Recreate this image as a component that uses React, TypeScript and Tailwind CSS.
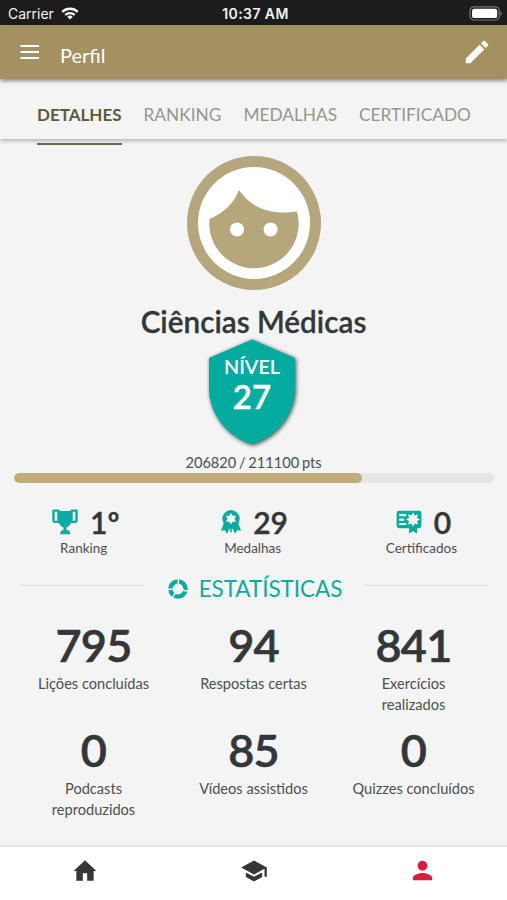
import type { ReactNode } from "react";
import { MdEdit, MdPerson, MdSchool } from "react-icons/md";

const tabs = ["RANKING", "MEDALHAS", "CERTIFICADO"];

const stats = [
  { value: "795", label: "Lições concluídas" },
  { value: "94", label: "Respostas certas" },
  { value: "841", label: "Exercícios realizados" },
  { value: "0", label: "Podcasts reproduzidos" },
  { value: "85", label: "Vídeos assistidos" },
  { value: "0", label: "Quizzes concluídos" },
];

const points = { current: 206820, next: 211100, percent: 72.5 };

function WifiIcon() {
  return (
    <svg viewBox="0 0 18 13" className="w-[18px] h-[13px]" fill="none" stroke="#f4f4f4" strokeWidth="2.3">
      <path d="M1.2 4.9a11.2 11.2 0 0 1 15.6 0" />
      <path d="M4.2 8a7 7 0 0 1 9.6 0" />
      <path d="M9 12.6 6.3 9.8a4 4 0 0 1 5.4 0z" fill="#f4f4f4" stroke="none" />
    </svg>
  );
}

function BatteryIcon() {
  return (
    <svg viewBox="0 0 34 15" className="w-[34px] h-[15px]">
      <rect x="1" y="0.8" width="29.2" height="13.2" rx="4" fill="none" stroke="#77777a" strokeWidth="1.2" />
      <rect x="3" y="2.7" width="25.2" height="9.4" rx="2.2" fill="#fff" />
      <path d="M31.5 5.2c1.8.5 1.8 4 0 4.5z" fill="#77777a" />
    </svg>
  );
}

function Avatar() {
  return (
    <svg viewBox="0 0 134 134" className="w-[134px] h-[134px]">
      <circle cx="67" cy="67" r="67" fill="#b5a67c" />
      <circle cx="67" cy="67" r="56" fill="#fff" />
      <path
        d="M52 34C64 52 84 59.500 110 55.500A44.700 44.700 0 1 1 22.500 63C37 57 47 47 52 34z"
        fill="#b5a67c"
      />
      <circle cx="50" cy="73.500" r="7" fill="#fff" />
      <circle cx="83.600" cy="73.500" r="7" fill="#fff" />
    </svg>
  );
}

function TrophyIcon() {
  return (
    <svg viewBox="0 0 26 26" className="w-[26px] h-[26px]" fill="#0aaba0">
      <path
        fillRule="evenodd"
        d="M1.500.5h5c.8 0 1.200.6 1.200 1.500h10.600c0-.9.4-1.500 1.200-1.500h5c.8 0 1.200.4 1.200 1.200v10.100c0 1.200-.9 2.200-2.200 2.200h-4.300c-1 2.300-2.800 3.800-4.700 4.500v2.600c2 .2 3.500 1.200 3.500 2.800v1.300H8.300v-1.300c0-1.600 1.400-2.600 3.200-2.800v-2.600C9.300 17.800 7.700 16.300 6.800 14H2.500C1.200 14 .3 13 .3 11.800V1.700C.3.900.7.5 1.500.5zM2.700 2.700v9h2.600v-9zM20.700 2.700v9h2.600v-9z"
      />
    </svg>
  );
}

function MedalIcon() {
  return (
    <svg viewBox="0 0 20 24" className="w-5 h-6">
      <path
        d="M3.200 12 0 20.800l3.800-.5 2.200 3.400 2.400-5h.8v3.600h1.600v-3.600h.8l2.400 5 2.200-3.400 3.800.5L16.800 12z"
        fill="#0aaba0"
      />
      <circle cx="10" cy="8.800" r="8.700" fill="#0aaba0" />
      <path
        d="m10 3 1.700 2.800 3.300-.1-1.500 3.100 1.500 3-3.300-.1L10 14.500l-1.700-2.800-3.300.1 1.500-3L5 5.700l3.300.1z"
        fill="#f4f4f4"
      />
    </svg>
  );
}

function CertificateIcon() {
  return (
    <svg viewBox="0 0 26 24" className="w-[26px] h-6">
      <path
        d="M3 .8h20a2.400 2.400 0 0 1 2.400 2.400v12.600a2.400 2.400 0 0 1-2.400 2.400h-2v5.300l-4-2.200-4 2.200v-5.300H3a2.400 2.400 0 0 1-2.400-2.400V3.200A2.400 2.400 0 0 1 3 .8z"
        fill="#0aaba0"
      />
      <path d="M3.200 5.200h7M3.200 9.600h5M3.200 14h7" stroke="#f4f4f4" strokeWidth="2.200" />
      <path
        d="m17 2.300 1.700 3.100 3.300-1.100-1 3.400 3.100 1.700-3.100 1.700 1 3.400-3.300-1.100-1.700 3.100-1.700-3.100-3.300 1.100 1-3.400-3.100-1.700L13 7.700l-1-3.400 3.300 1.100z"
        fill="#f4f4f4"
      />
    </svg>
  );
}

function DonutIcon() {
  return (
    <svg viewBox="0 0 20 20" className="w-5 h-5" fill="none" stroke="#0aaba0" strokeWidth="4.400">
      <circle cx="10" cy="10" r="7.600" />
      <path d="M10.300 0v6M20 12.200l-6-1.300M4.500 18.500l2.800-4.500M0 10.500 5 10" stroke="#f4f4f4" strokeWidth="1.500" />
    </svg>
  );
}

function Summary({ icon, value, label }: { icon: ReactNode; value: string; label: string }) {
  return (
    <div className="flex flex-col items-center">
      <div className="flex items-center gap-3 h-[34px] pl-1">
        {icon}
        <span className="text-[30px] leading-[34px] -mt-px font-semibold [-webkit-text-stroke:0.4px]">{value}</span>
      </div>
      <span className="text-[13.500px] leading-[18px] text-[#4c4f52]">{label}</span>
    </div>
  );
}

export default function App() {
  return (
    <div className="w-[507px] h-[900px] flex flex-col overflow-hidden bg-[#f4f4f4] text-[#33373a] font-['Lato',sans-serif]">
      {/* Status bar */}
      <div className="h-[25px] shrink-0 bg-[#1c1c1c] text-[#f4f4f4] grid grid-cols-3 items-center pl-2 pr-1 pt-0.5 font-['Inter',sans-serif] text-sm">
        <div className="flex items-center gap-[7px]">
          <span>Carrier</span>
          <WifiIcon />
        </div>
        <span className="text-center font-semibold tracking-[0.4px]">10:37 AM</span>
        <div className="flex justify-end">
          <BatteryIcon />
        </div>
      </div>

      {/* Toolbar */}
      <header className="relative z-20 h-[54px] shrink-0 bg-[#a39161] shadow-[0_2px_4px_rgba(0,0,0,0.45)] flex items-center pl-5 pr-[15px] text-white">
        <svg viewBox="0 0 20 14" className="w-5 h-3.5" stroke="#fff" strokeWidth="1.800">
          <path d="M0.500 1h18.500M0.500 7h18.500M0.500 13h18.500" />
        </svg>
        <h1 className="ml-5 mt-1.5 text-[20px] leading-6">Perfil</h1>
        <MdEdit className="ml-auto w-[30px] h-[30px]" />
      </header>

      {/* Tabs */}
      <nav className="relative z-10 h-[60px] shrink-0 shadow-[0_2px_4px_rgba(0,0,0,0.25)] bg-[#f4f4f4] flex items-start gap-[22px] pl-[37px] text-[17.3px] leading-6 text-[#98968b]">
        <span className="h-[66px] pt-6 border-b-2 border-[#6b6848] text-[#5d5b3c] text-[17px] font-bold">DETALHES</span>
        {tabs.map((tab) => (
          <span key={tab} className="pt-6">
            {tab}
          </span>
        ))}
      </nav>

      <main className="flex-1 flex flex-col items-center pt-[17px]">
        <Avatar />
        <h2 className="mt-3.5 text-[29.7px] leading-9 font-semibold [-webkit-text-stroke:0.3px]">Ciências Médicas</h2>

        {/* Level shield */}
        <div className="relative w-[88px] h-[106px] -mt-px mr-[3px] flex flex-col items-center text-white font-semibold">
          <svg
            viewBox="0 0 88 106"
            className="absolute inset-0 w-[88px] h-[106px] overflow-visible drop-shadow-[1px_1px_2px_rgba(0,0,0,0.7)]"
          >
            <path d="M44 .5 87 19v30C87 75 69 98 44 105.500 19 98 1 75 1 49V19z" fill="#04aca0" />
          </svg>
          <span className="relative mt-[15px] text-[19.8px] leading-6">NÍVEL</span>
          <span className="relative text-[33px] leading-9 [-webkit-text-stroke:0.4px]">27</span>
        </div>

        <p className="mt-2 text-[14.6px] leading-5 [word-spacing:-1px] text-[#4c4f52]">
          {points.current} / {points.next} pts
        </p>
        <div className="w-[480px] h-2.5 rounded-full bg-[#e6e6e6] overflow-hidden">
          <div className="h-full rounded-full bg-[#c0ac7a]" style={{ width: `${points.percent}%` }} />
        </div>

        <div className="w-full flex justify-between pl-12 pr-[50px] mt-[22px]">
          <Summary icon={<TrophyIcon />} value="1º" label="Ranking" />
          <Summary icon={<MedalIcon />} value="29" label="Medalhas" />
          <Summary icon={<CertificateIcon />} value="0" label="Certificados" />
        </div>

        <div className="w-full flex items-start pl-5 pr-[19px] mt-4 text-[#0aaba0]">
          <div className="h-px flex-1 mt-3 bg-[#dcdcdc]" />
          <div className="ml-6 mr-[22px] flex items-center gap-[11px]">
            <DonutIcon />
            <span className="text-[22.4px] leading-8">ESTATÍSTICAS</span>
          </div>
          <div className="h-px flex-1 mt-3 bg-[#dcdcdc]" />
        </div>

        <div className="w-[480px] grid grid-cols-3 mt-[13px]">
          {stats.map((stat) => (
            <div key={stat.label} className="h-[105px] px-4 flex flex-col items-center text-center">
              <span className="text-[45px] leading-[55px] tracking-[-0.8px] font-semibold [-webkit-text-stroke:0.6px]">
                {stat.value}
              </span>
              <span className="text-[14.6px] leading-[21px] text-[#4c4f52]">{stat.label}</span>
            </div>
          ))}
        </div>
      </main>

      {/* Bottom navigation */}
      <footer className="h-[53px] shrink-0 bg-white shadow-[0_-1px_2px_rgba(0,0,0,0.12)] grid grid-cols-3 justify-items-center pt-[11px]">
        <svg viewBox="0 0 24 24" className="w-[26px] h-[26px]" fill="#33373a">
          <path d="M10 21v-7h4v7h6v-9h2.500L12 2 1.500 12H4v9z" />
        </svg>
        <MdSchool className="w-7 h-7 -mt-px" />
        <MdPerson className="w-[29px] h-[29px] -mt-0.5 text-[#d81f3a]" />
      </footer>
    </div>
  );
}
